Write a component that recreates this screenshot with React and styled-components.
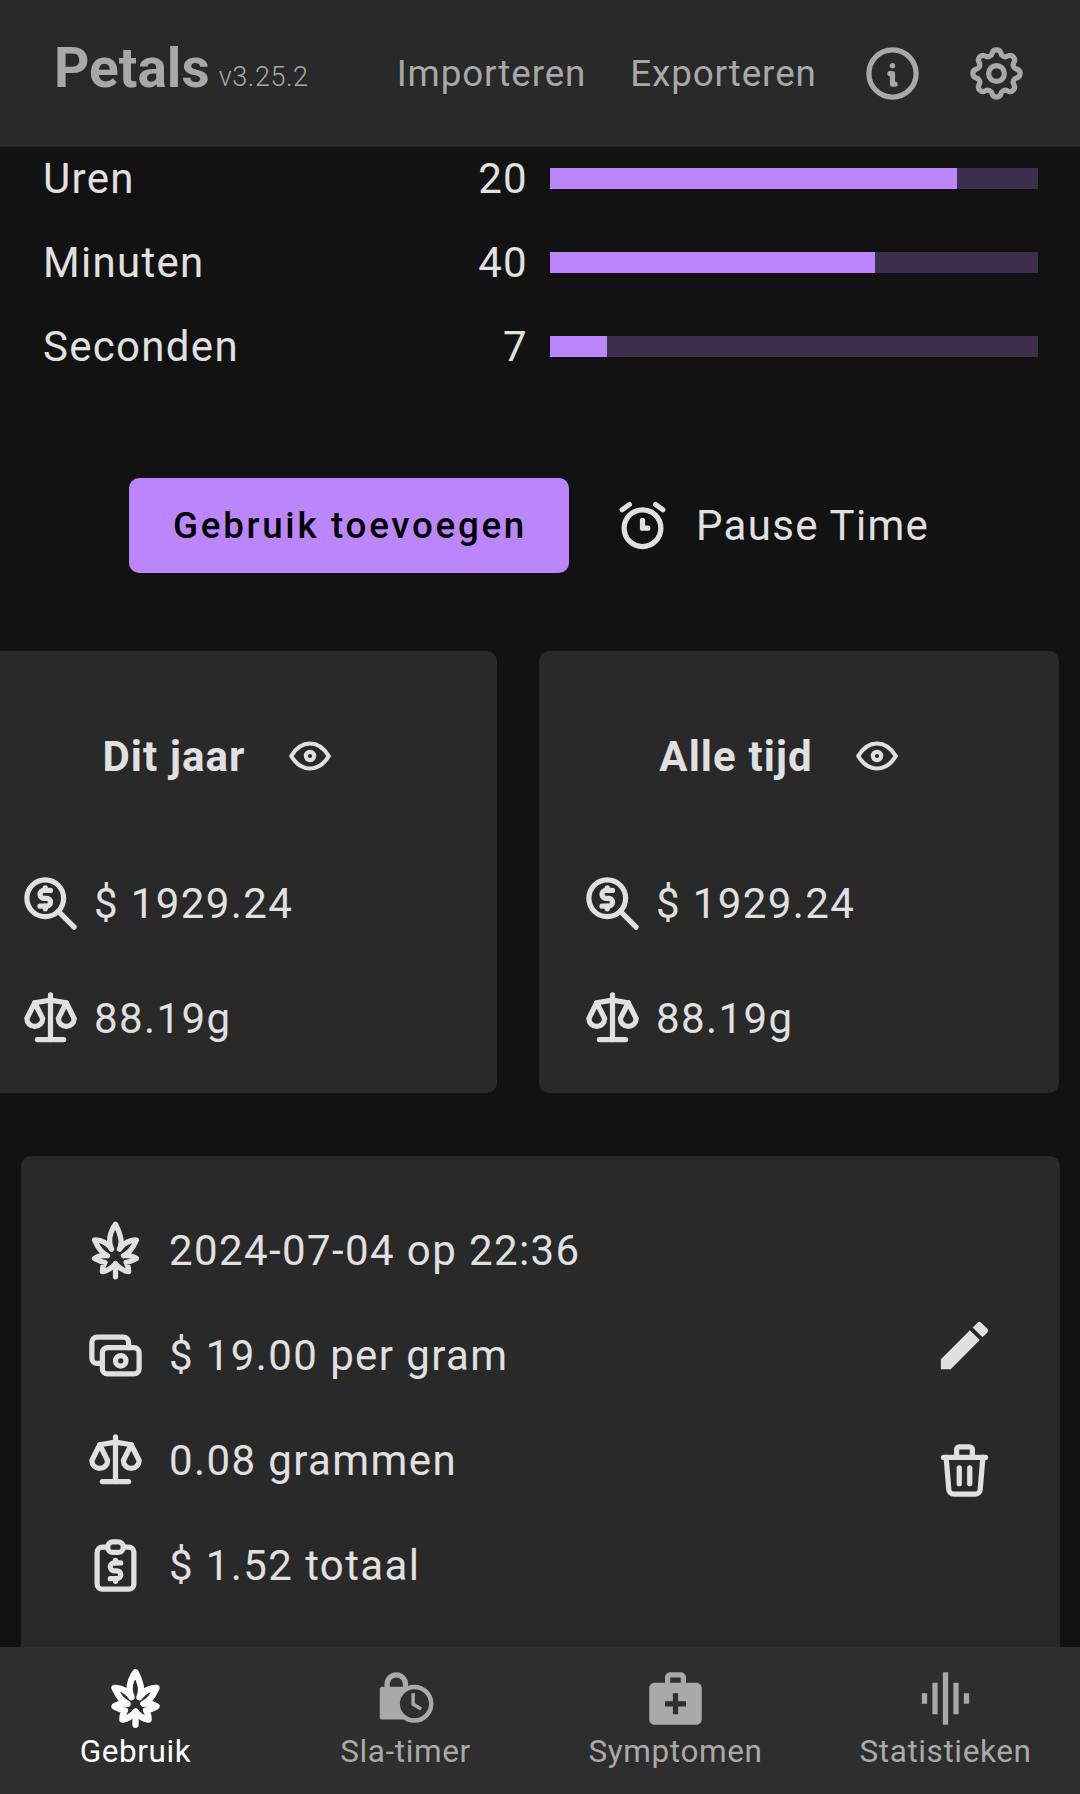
import React from "react";
import styled, { createGlobalStyle } from "styled-components";
import {
  TbAlarm,
  TbCannabis,
  TbCash,
  TbEye,
  TbInfoCircle,
  TbReportMoney,
  TbScale,
  TbSettings,
  TbTrash,
  TbZoomMoney,
} from "react-icons/tb";
import { MdEdit, MdGraphicEq, MdMedicalServices } from "react-icons/md";

const GlobalStyle = createGlobalStyle`
  * { box-sizing: border-box; }
  html, body { margin: 0; padding: 0; background: #121212; }
  body { font-family: Roboto, "Noto Sans", sans-serif; color: #e0e0e0; }
`;

const timeRows = [
  { label: "Uren", value: 20, max: 24 },
  { label: "Minuten", value: 40, max: 60 },
  { label: "Seconden", value: 7, max: 60 },
];

const statCards = [
  { title: "Dit jaar", money: "$ 1929.24", weight: "88.19g" },
  { title: "Alle tijd", money: "$ 1929.24", weight: "88.19g" },
];

const entryRows = [
  { Icon: TbCannabis, text: "2024-07-04 op 22:36" },
  { Icon: TbCash, text: "$ 19.00 per gram" },
  { Icon: TbScale, text: "0.08 grammen" },
  { Icon: TbReportMoney, text: "$ 1.52 totaal" },
];

// lock with a clock on top, not in the icon packs in this form
const LockClock = ({ size }) => (
  <svg width={size} height={size} viewBox="0 0 24 24">
    <path
      d="M4 8V6.6C4 4 6 2 8.5 2S13 4 13 6.6V8H4Z M6 7.6H11V6.6C11 5.2 9.9 4 8.5 4S6 5.2 6 6.6V7.6Z"
      fill="currentColor"
      fillRule="evenodd"
    />
    <path
      d="M3.2 7.5H13.5V20H3.2A1 1 0 0 1 2.2 19V8.5A1 1 0 0 1 3.2 7.5Z"
      fill="currentColor"
    />
    <circle cx="15.4" cy="14" r="6.4" fill="#2e2e2e" stroke="currentColor" strokeWidth="1.7" />
    <path d="M14.9 10V14.2L18 16" fill="none" stroke="currentColor" strokeWidth="1.3" />
  </svg>
);

const navItems = [
  { label: "Gebruik", Icon: TbCannabis, active: true },
  { label: "Sla-timer", Icon: LockClock },
  { label: "Symptomen", Icon: MdMedicalServices },
  { label: "Statistieken", Icon: MdGraphicEq },
];

const App = () => {
  return (
    <Screen>
      <GlobalStyle />
      <Header>
        <Title>Petals</Title>
        <Version>v3.25.2</Version>
        <HeaderLink $first>Importeren</HeaderLink>
        <HeaderLink>Exporteren</HeaderLink>
        <HeaderIcon $first>
          <TbInfoCircle size={63} />
        </HeaderIcon>
        <HeaderIcon>
          <TbSettings size={63} />
        </HeaderIcon>
      </Header>

      <Content>
        <TimeList>
          {timeRows.map((row) => (
            <TimeRow key={row.label}>
              <span>{row.label}</span>
              <TimeValue>{row.value}</TimeValue>
              <BarTrack>
                <BarFill style={{ width: `${(row.value / row.max) * 100}%` }} />
              </BarTrack>
            </TimeRow>
          ))}
        </TimeList>

        <Actions>
          <PrimaryButton>Gebruik toevoegen</PrimaryButton>
          <PauseButton>
            <TbAlarm size={63} />
            Pause Time
          </PauseButton>
        </Actions>

        <StatsRow>
          {statCards.map((card) => (
            <StatCard key={card.title}>
              <StatTitle>
                <span>{card.title}</span>
                <TbEye size={50} />
              </StatTitle>
              <StatLine>
                <TbZoomMoney size={63} />
                {card.money}
              </StatLine>
              <StatLine>
                <TbScale size={63} />
                {card.weight}
              </StatLine>
            </StatCard>
          ))}
        </StatsRow>

        <EntryCard>
          <EntryRows>
            {entryRows.map(({ Icon, text }) => (
              <EntryRow key={text}>
                <Icon size={63} />
                {text}
              </EntryRow>
            ))}
          </EntryRows>
          <EntryActions>
            <MdEdit size={63} />
            <TbTrash size={63} />
          </EntryActions>
        </EntryCard>
      </Content>

      <BottomNav>
        {navItems.map(({ label, Icon, active }) => (
          <NavItem key={label} $active={active}>
            <NavIcon $active={active}>
              <Icon size={63} />
            </NavIcon>
            <NavLabel>{label}</NavLabel>
          </NavItem>
        ))}
      </BottomNav>
    </Screen>
  );
};

export default App;

const Screen = styled.div`
  width: 1080px;
  height: 1794px;
  display: flex;
  flex-direction: column;
  overflow: hidden;
  background: #121212;
`;

const Header = styled.header`
  flex: 0 0 147px;
  display: flex;
  align-items: center;
  padding-left: 54px;
  background: #292929;
  color: #a8a8a8;
`;

const Title = styled.span`
  margin-bottom: 11px;
  font-size: 55px;
  font-weight: 700;
  line-height: 60px;
`;

const Version = styled.span`
  margin-left: 9px;
  font-size: 27px;
  font-weight: 300;
  letter-spacing: 0.6px;
  padding-top: 6px;
`;

const HeaderLink = styled.span`
  margin-left: ${(p) => (p.$first ? "88px" : "44px")};
  font-size: 36.75px;
  letter-spacing: 0.9px;
`;

const HeaderIcon = styled.span`
  display: flex;
  margin-left: ${(p) => (p.$first ? "44px" : "41px")};
`;

const Content = styled.main`
  flex: 1;
  min-height: 0;
  overflow: hidden;
`;

const TimeList = styled.div`
  margin-top: -10.5px;
  padding: 0 42px 0 43px;
`;

const TimeRow = styled.div`
  height: 84px;
  display: grid;
  grid-template-columns: 1fr auto 488px;
  align-items: center;
  column-gap: 22px;
  font-size: 42px;
  letter-spacing: 1.3px;
`;

const TimeValue = styled.span`
  text-align: right;
`;

const BarTrack = styled.div`
  height: 21px;
  background: #3d2e4d;
`;

const BarFill = styled.div`
  height: 100%;
  background: #bb86fc;
`;

const Actions = styled.div`
  margin-top: 89.5px;
  padding-left: 129px;
  display: flex;
  align-items: center;
`;

const PrimaryButton = styled.button`
  width: 440px;
  height: 95px;
  padding-left: 8px;
  border: none;
  border-radius: 10px;
  background: #bb86fc;
  color: #000;
  font-family: inherit;
  font-size: 36.75px;
  font-weight: 500;
  letter-spacing: 2.7px;
`;

const PauseButton = styled.div`
  margin-left: 42px;
  display: flex;
  align-items: center;
  gap: 22px;
  font-size: 42px;
  letter-spacing: 1.3px;
`;

const StatsRow = styled.div`
  margin: 78px 0 0 -23px;
  display: flex;
  gap: 42px;
`;

const StatCard = styled.section`
  flex: 0 0 520px;
  height: 442px;
  padding: 79px 0 0 42px;
  border-radius: 10px;
  background: #292929;
`;

const StatTitle = styled.div`
  height: 52px;
  margin-bottom: 86px;
  padding-right: 79px;
  display: flex;
  align-items: center;
  justify-content: center;
  gap: 39px;
  font-size: 42px;
  font-weight: 700;
  letter-spacing: 1.1px;
`;

const StatLine = styled.div`
  height: 70px;
  margin-bottom: 45px;
  display: flex;
  align-items: center;
  gap: 12px;
  font-size: 42px;
  letter-spacing: 1.4px;
`;

const EntryCard = styled.section`
  margin: 63px 20px 0 21px;
  padding: 59px 61px 59px 62.5px;
  display: flex;
  align-items: center;
  justify-content: space-between;
  border-radius: 10px;
  background: #292929;
`;

const EntryRows = styled.div`
  display: flex;
  flex-direction: column;
  gap: 35px;
`;

const EntryRow = styled.div`
  height: 70px;
  display: flex;
  align-items: center;
  gap: 22.5px;
  font-size: 42px;
  letter-spacing: 1.4px;
`;

const EntryActions = styled.div`
  width: 70px;
  display: flex;
  flex-direction: column;
  align-items: center;
  gap: 62px;
`;

const BottomNav = styled.nav`
  flex: 0 0 147px;
  display: grid;
  grid-template-columns: repeat(4, 1fr);
  background: #2e2e2e;
`;

const NavItem = styled.div`
  display: flex;
  flex-direction: column;
  align-items: center;
  padding-top: 20px;
  color: ${(p) => (p.$active ? "#fff" : "#a9a9a9")};
`;

const NavIcon = styled.div`
  height: 63px;
  display: flex;
  align-items: center;
  justify-content: center;

  svg {
    stroke-width: ${(p) => (p.$active ? 2.4 : "")};
  }
`;

const NavLabel = styled.span`
  margin-top: 2px;
  padding-left: 1px;
  font-size: 31.5px;
  line-height: 40px;
  letter-spacing: 0.6px;
`;
